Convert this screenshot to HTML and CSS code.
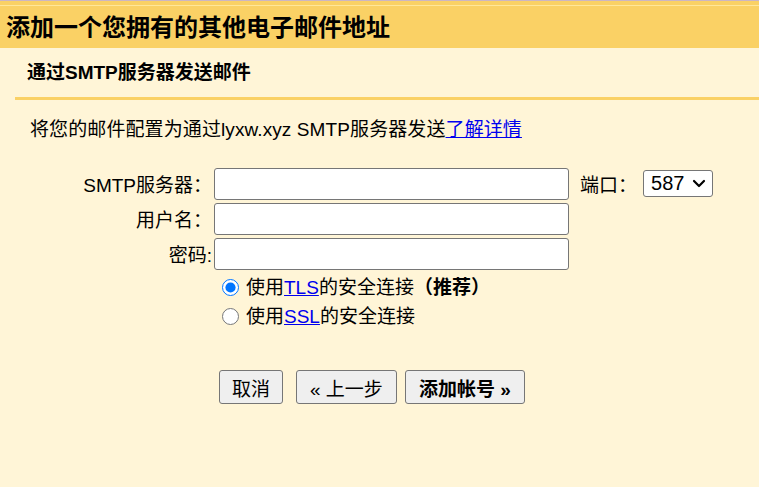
FILE: index.html
```html
<!DOCTYPE html>
<html lang="zh-CN">
<head>
<meta charset="utf-8">
<title>添加一个您拥有的其他电子邮件地址</title>
<link rel="stylesheet" href="styles.css">
</head>
<body>
<div class="titlebar">
  <h1 class="title">添加一个您拥有的其他电子邮件地址</h1>
</div>
<div class="subhead">通过SMTP服务器发送邮件</div>
<p class="intro">将您的邮件配置为通过lyxw.xyz SMTP服务器发送<a href="#">了解详情</a></p>
<form class="form">
  <div class="row">
    <label class="lbl">SMTP服务器：</label>
    <input class="field" type="text">
    <span class="port-lbl">端口：</span>
    <span class="port-wrap">
      <select class="port"><option>587</option></select>
      <svg class="chev" width="14" height="9" viewBox="0 0 14 9"><path d="M2 2 L7 7 L12 2" fill="none" stroke="#000" stroke-width="2.2" stroke-linecap="round" stroke-linejoin="round"/></svg>
    </span>
  </div>
  <div class="row">
    <label class="lbl">用户名：</label>
    <input class="field" type="text">
  </div>
  <div class="row">
    <label class="lbl">密码:</label>
    <input class="field" type="password">
  </div>
  <div class="radios">
    <label class="radio"><input type="radio" name="sec" checked><span>使用<a href="#">TLS</a>的安全连接<b class="rec">（推荐）</b></span></label>
    <label class="radio"><input type="radio" name="sec"><span>使用<a href="#">SSL</a>的安全连接</span></label>
  </div>
  <div class="buttons">
    <button type="button" class="btn">取消</button>
    <button type="button" class="btn prev">« 上一步</button>
    <button type="button" class="btn primary">添加帐号 »</button>
  </div>
</form>
</body>
</html>
```
FILE: styles.css
```css
html, body {
  margin: 0;
  padding: 0;
}
body {
  background: #fff5d7;
  font-family: "Liberation Sans", "Noto Sans CJK SC", sans-serif;
  font-size: 19px;
  color: #000;
}
a { color: #0000ee; text-decoration: underline; }

.titlebar {
  border-top: 1px solid #cbb6c3;
  background: #fad165;
  padding-top: 4px;
}
.title {
  margin: 0;
  border-top: 1px solid #ffe79a;
  height: 42px;
  line-height: 44px;
  font-size: 24px;
  font-weight: bold;
  padding-left: 6px;
}
.subhead {
  margin-left: 15px;
  height: 49px;
  line-height: 50px;
  padding-left: 12px;
  border-bottom: 3px solid #fad165;
  font-size: 19px;
  font-weight: bold;
}
.intro {
  margin: 17px 0 0 30px;
  line-height: 26px;
  letter-spacing: 0.1px;
}
.form {
  margin-top: 25px;
}
.row {
  display: flex;
  align-items: center;
  height: 31px;
  margin-bottom: 4px;
}
.lbl {
  width: 212px;
  text-align: right;
  flex: none;
}
.field {
  box-sizing: border-box;
  margin: 0 0 0 2px;
  width: 355px;
  height: 32px;
  border: 1px solid #767676;
  border-radius: 3px;
  background: #fff;
  font-size: 18px;
  padding: 2px 4px;
}
.port-lbl {
  margin-left: 11px;
}
.port-wrap {
  position: relative;
  display: inline-flex;
  margin-left: 6px;
}
.port {
  -webkit-appearance: none;
  appearance: none;
  box-sizing: border-box;
  height: 27px;
  width: 70px;
  font-family: "Liberation Sans", sans-serif;
  font-size: 20px;
  line-height: 25px;
  border: 1px solid #767676;
  border-radius: 3px;
  background: #fff;
  color: #000;
  padding: 0 0 0 7px;
}
.chev {
  position: absolute;
  right: 7px;
  top: 9px;
  pointer-events: none;
}
.radios {
  margin-left: 221px;
  margin-top: 4px;
  display: flex;
  flex-direction: column;
}
.radio {
  display: flex;
  align-items: center;
  height: 29px;
}
.radio input {
  margin: 0 7px 0 1px;
  width: 17px;
  height: 17px;
}
.radio span {
  line-height: 24px;
}
.rec {
  font-weight: bold;
}
.buttons {
  display: flex;
  margin: 39px 0 0 219px;
}
.btn {
  box-sizing: border-box;
  height: 34px;
  padding: 0 12px;
  border: 1px solid #767676;
  border-radius: 3px;
  background: #efefef;
  font-family: "Liberation Sans", "Noto Sans CJK SC", sans-serif;
  font-size: 19px;
  color: #000;
}
.btn.prev { margin-left: 13px; padding: 0 13px; }
.btn.primary { margin-left: 8px; padding: 0 13px; font-weight: bold; }
```
